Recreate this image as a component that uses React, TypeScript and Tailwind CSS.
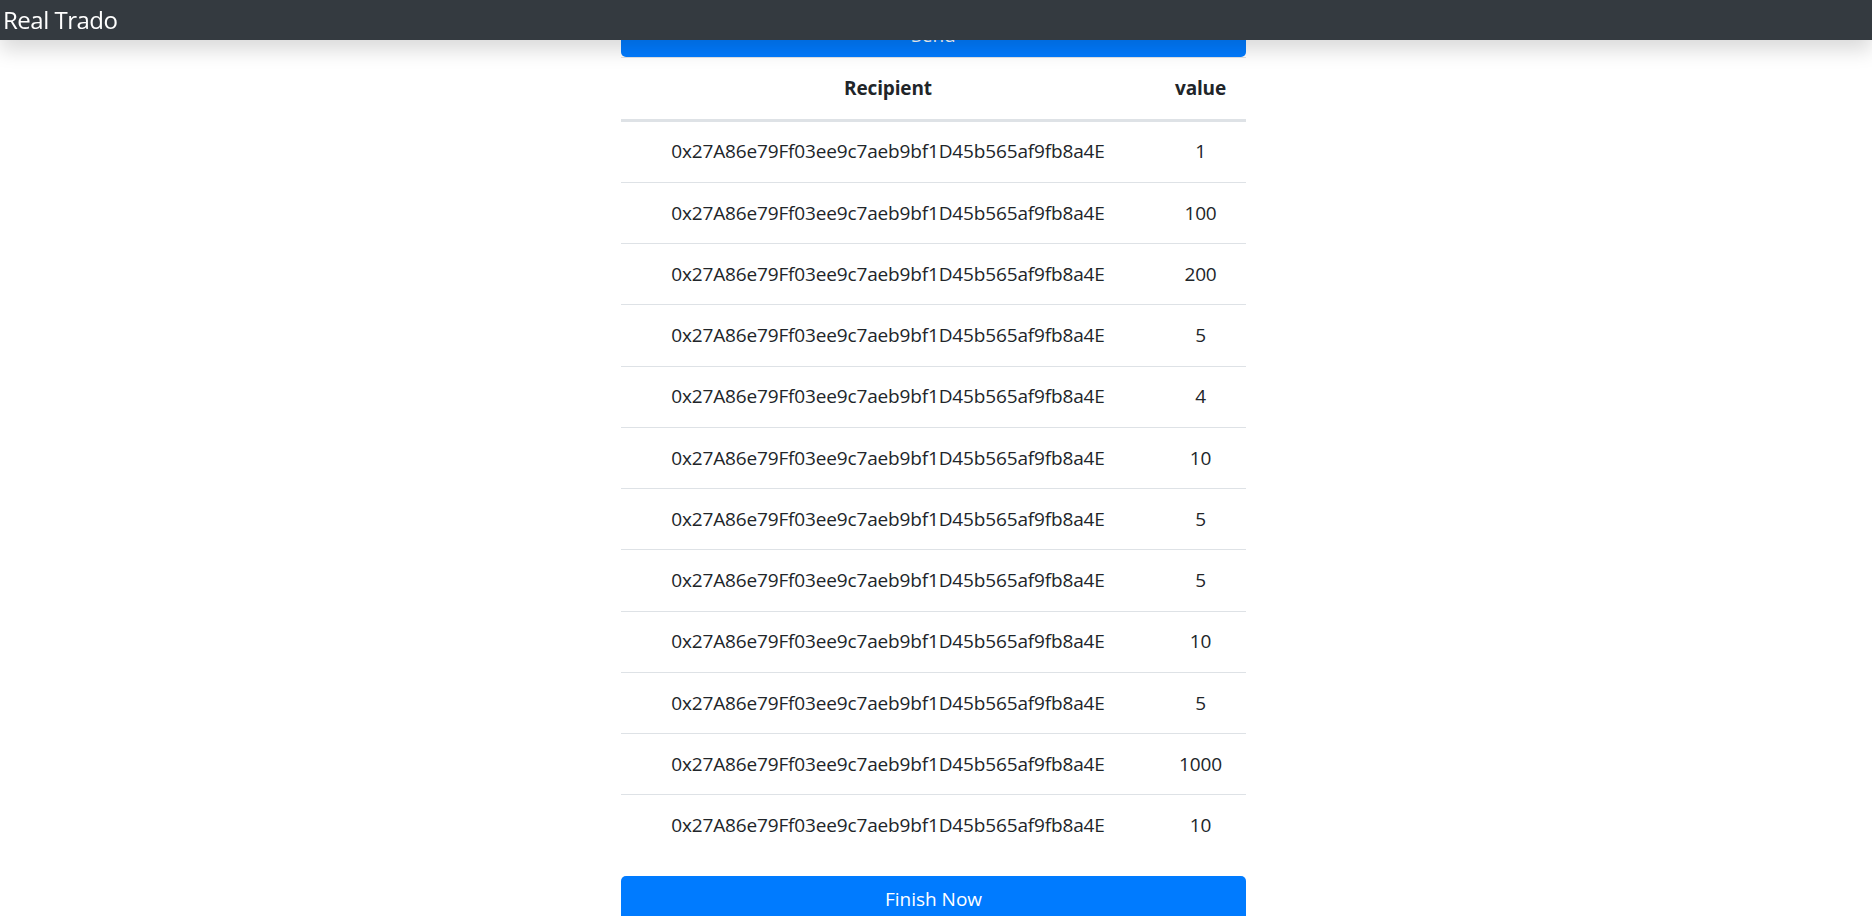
import React from "react";

const ADDR = "0x27A86e79Ff03ee9c7aeb9bf1D45b565af9fb8a4E";
const rows = [1, 100, 200, 5, 4, 10, 5, 5, 10, 5, 1000, 10];

export default function App() {
  return (
    <div
      className="relative h-screen overflow-hidden bg-white text-[#212529]"
      style={{ fontFamily: '"Open Sans", "Noto Sans", sans-serif' }}
    >
      <header className="fixed top-0 left-0 right-0 z-10 h-[40px] bg-[#343a40] shadow-[0_10px_20px_rgba(0,0,0,0.15)] flex items-center">
        <span className="pl-[3px] text-[24px] leading-[40px] tracking-[-0.5px] text-white">
          Real Trado
        </span>
      </header>

      <main className="flex justify-center pr-[5px] pt-[9.5px]">
        <div className="w-[625px] flex flex-col">
          <button className="h-[47.5px] w-full rounded-[5px] bg-[#007bff] text-white text-[19px] leading-[30px] pt-[4px]">
            Send
          </button>

          <div className="flex flex-col mb-[20px]">
            <div className="flex h-[63.5px] border-t border-[#dee2e6] border-b-[2.5px] border-b-[#dee2e6] font-bold text-[19px] tracking-[-0.15px]">
              <div className="w-[534px] flex items-center justify-center">Recipient</div>
              <div className="flex-1 flex items-center justify-center">value</div>
            </div>
            {rows.map((v, i) => (
              <div
                key={i}
                className="flex h-[61.25px] border-t border-[#dee2e6] text-[19px] tracking-[-0.15px]"
              >
                <div className="w-[534px] flex items-center justify-center">{ADDR}</div>
                <div className="flex-1 flex items-center justify-center">{v}</div>
              </div>
            ))}
          </div>

          <button className="h-[47.5px] w-full rounded-[5px] bg-[#007bff] text-white text-[19px] leading-[30px]">
            Finish Now
          </button>
        </div>
      </main>
    </div>
  );
}
